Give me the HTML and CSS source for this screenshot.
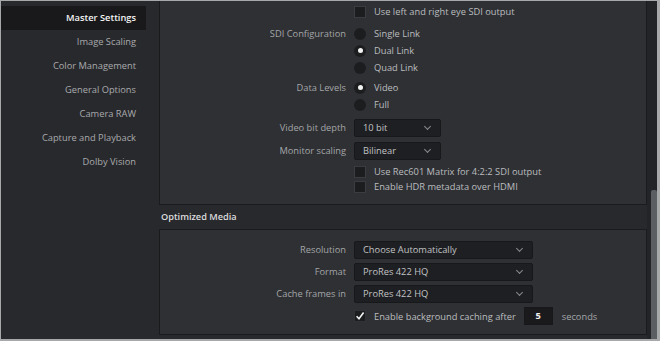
FILE: index.html
```html
<!DOCTYPE html>
<html lang="en">
<head>
  <meta charset="UTF-8" />
  <title>Project Settings</title>
  <link rel="stylesheet" href="styles.css">
</head>
<body>
  <div class="window">
    <nav class="sidebar">
      <div class="nav-item active">Master Settings</div>
      <div class="nav-item">Image Scaling</div>
      <div class="nav-item">Color Management</div>
      <div class="nav-item">General Options</div>
      <div class="nav-item">Camera RAW</div>
      <div class="nav-item">Capture and Playback</div>
      <div class="nav-item">Dolby Vision</div>
    </nav>

    <main class="content">
      <section class="box box-top">
        <div class="row row-eye">
          <span class="label"></span>
          <label class="option"><span class="check"></span>Use left and right eye SDI output</label>
        </div>

        <div class="row group-sdi">
          <span class="label">SDI Configuration</span>
          <div class="options">
            <label class="option"><span class="radio"></span>Single Link</label>
            <label class="option"><span class="radio on"></span>Dual Link</label>
            <label class="option"><span class="radio"></span>Quad Link</label>
          </div>
        </div>

        <div class="row group-levels">
          <span class="label">Data Levels</span>
          <div class="options">
            <label class="option"><span class="radio on"></span>Video</label>
            <label class="option"><span class="radio"></span>Full</label>
          </div>
        </div>

        <div class="row row-select first-select">
          <span class="label">Video bit depth</span>
          <div class="select small">10 bit<span class="chevron"></span></div>
        </div>
        <div class="row row-select">
          <span class="label">Monitor scaling</span>
          <div class="select small">Bilinear<span class="chevron"></span></div>
        </div>

        <div class="row row-check first-check">
          <span class="label"></span>
          <label class="option"><span class="check"></span>Use Rec601 Matrix for 4:2:2 SDI output</label>
        </div>
        <div class="row row-check">
          <span class="label"></span>
          <label class="option"><span class="check"></span>Enable HDR metadata over HDMI</label>
        </div>
      </section>

      <h2 class="section-title">Optimized Media</h2>

      <section class="box box-media">
        <div class="row row-select">
          <span class="label">Resolution</span>
          <div class="select wide">Choose Automatically<span class="chevron"></span></div>
        </div>
        <div class="row row-select">
          <span class="label">Format</span>
          <div class="select wide">ProRes 422 HQ<span class="chevron"></span></div>
        </div>
        <div class="row row-select">
          <span class="label">Cache frames in</span>
          <div class="select wide">ProRes 422 HQ<span class="chevron"></span></div>
        </div>
        <div class="row row-cache">
          <span class="label"></span>
          <label class="option">
            <span class="check checked">
              <svg width="10" height="10" viewBox="0 0 10 10"><path d="M1.6 5.2 L4 7.8 L8.6 1.6" fill="none" stroke="#f2f2f2" stroke-width="1.6"/></svg>
            </span>
            Enable background caching after
            <span class="num">5</span>
            <span class="unit">seconds</span>
          </label>
        </div>
      </section>
    </main>

    <div class="scrollbar"><div class="thumb"></div></div>
  </div>
</body>
</html>
```

FILE: styles.css
```css
body { margin: 0; background: #a7a8aa; font-family: "Open Sans", "Liberation Sans", sans-serif; font-size: 9.3px; }
.window { width: 656px; height: 338px; margin: 1px 0 0 1px; background: #28292d; display: flex; overflow: hidden; }

.sidebar { width: 158px; flex: none; padding-top: 5px; }
.nav-item { width: 135px; height: 24px; line-height: 24px; padding-right: 10px; text-align: right; color: #a9aaac; }
.nav-item.active { background: #19191b; color: #f4f4f4; font-weight: 600; }

.content { width: 488px; flex: none; }
.box { background: #2e3034; border: 1px solid #1a1b1d; }
.box-top { border-top: none; height: 201px; padding-top: 2px; }
.box-media { height: 93px; padding-top: 11px; }

.row { display: flex; align-items: flex-start; }
.label { width: 186px; flex: none; margin-right: 8px; text-align: right; color: #a4a5a7; line-height: 17px; }
.options { display: flex; flex-direction: column; }
.option { display: flex; align-items: center; height: 17px; color: #bcbdbf; white-space: nowrap; }

.group-sdi { margin-top: 5px; }
.group-levels { margin-top: 3px; }
.row-select { margin-bottom: 4px; }
.row-select .label { line-height: 18px; }
.first-select { margin-top: 6px; margin-bottom: 5px; }
.first-check { margin-top: 2px; }
.row-check .option { height: 15px; }

.check { width: 10px; height: 10px; border: 1px solid #3a3c40; background: #1c1d1f; margin-right: 8px; flex: none; display: flex; align-items: center; justify-content: center; }
.check.checked { border-color: #303235; }
.radio { width: 12px; height: 12px; border-radius: 50%; background: #1c1d1f; margin-right: 8px; flex: none; display: flex; align-items: center; justify-content: center; }
.radio.on::after { content: ""; width: 5px; height: 5px; border-radius: 50%; background: #f2f2f2; }

.select { position: relative; height: 16px; line-height: 16px; padding: 0 8px; background: #1e1f22; border: 1px solid #17181a; border-radius: 2px; color: #c2c3c5; }
.select.small { width: 69px; }
.select.wide { width: 161px; }
.chevron { position: absolute; right: 10px; top: 4px; width: 4px; height: 4px; border-right: 1px solid #8a8b8e; border-bottom: 1px solid #8a8b8e; transform: rotate(45deg); }

.section-title { margin: 0; height: 24px; line-height: 24px; padding-left: 2px; font-size: 9.2px; font-weight: 600; color: #dcdcde; }

.row-cache { margin-top: 1px; }
.row-cache .option { height: 18px; }
.num { width: 27px; height: 16px; line-height: 16px; margin-left: 8px; border: 1px solid #17181a; background: #1a1a1c; text-align: center; color: #f0f0f0; font-weight: 700; }
.unit { margin-left: 9px; color: #a4a5a7; }

.scrollbar { flex: 1; background: #232428; position: relative; }
.thumb { position: absolute; right: 0; top: 189px; bottom: 0; width: 6px; background: #5b5f64; border-radius: 2px 2px 0 0; }
```
